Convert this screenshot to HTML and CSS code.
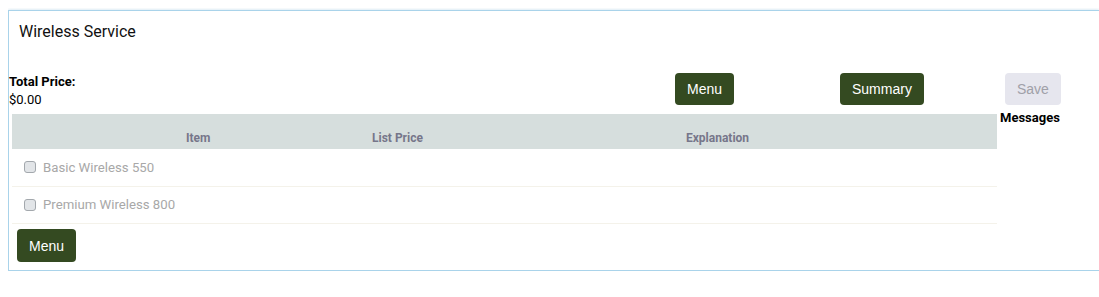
FILE: index.html
```html
<!DOCTYPE html>
<html>
<head>
<meta charset="utf-8">
<link rel="stylesheet" href="styles.css">
</head>
<body>
<div class="panel">
  <div class="title">Wireless Service</div>
  <div class="content">
    <div class="main">
      <div class="toprow">
        <div class="total">
          <div class="total-label">Total Price:</div>
          <div class="total-value">$0.00</div>
        </div>
        <div class="cell"><button class="btn">Menu</button></div>
        <div class="cell"><button class="btn">Summary</button></div>
      </div>
      <div class="table">
        <div class="thead">
          <div class="th th-item">Item</div>
          <div class="th">List Price</div>
          <div class="th">Explanation</div>
        </div>
        <div class="row"><span class="check"></span><span class="label">Basic Wireless 550</span></div>
        <div class="row"><span class="check"></span><span class="label">Premium Wireless 800</span></div>
      </div>
      <button class="btn btn-bottom">Menu</button>
    </div>
    <div class="side">
      <button class="btn-save">Save</button>
      <div class="messages">Messages</div>
    </div>
  </div>
</div>
</body>
</html>
```
FILE: styles.css
```css
* { box-sizing: border-box; }
html, body { overflow: hidden; }
body {
  margin: 8px 0 8px 8px;
  font-family: Roboto, "Liberation Sans", Arial, sans-serif;
  background: #fff;
}
.panel {
  margin-top: 2px;
  height: 261px;
  border: 1px solid #a9d3ea;
  border-right: none;
  box-shadow: 0 0 3px rgba(140, 190, 220, 0.5);
  background: #fff;
}
.title {
  padding: 11px 0 31px 10px;
  font-size: 16px;
  line-height: 20px;
  color: #111;
}
.content {
  display: flex;
}
.main {
  width: 989px;
  flex: none;
}
.toprow {
  display: grid;
  grid-template-columns: 666px 165px 1fr;
  height: 36px;
}
.total {
  font-size: 13px;
  line-height: 18px;
  color: #000;
}
.total-label { font-weight: bold; }
.btn {
  height: 32px;
  padding: 0 12px;
  border: none;
  border-radius: 4px;
  background: #344a21;
  color: #fff;
  font-family: "Liberation Sans", Arial, sans-serif;
  font-size: 14px;
  cursor: pointer;
}
.table {
  margin: 5px 0 0 3px;
  width: 985px;
}
.thead {
  display: grid;
  grid-template-columns: 360px 314px 1fr;
  height: 35px;
  background: #d6dedd;
  align-items: end;
  padding-bottom: 4px;
}
.th {
  font-size: 12px;
  line-height: 14px;
  font-weight: bold;
  color: #76768a;
}
.th-item { padding-left: 174px; }
.row {
  display: flex;
  align-items: center;
  height: 37.5px;
  border-bottom: 1px solid #f4f2ea;
  padding-left: 12px;
}
.check {
  width: 12px;
  height: 12px;
  border: 1px solid #a3a8ad;
  border-radius: 3px;
  background: #e2e5e8;
  margin-right: 7px;
}
.label {
  font-size: 13.2px;
  color: #a8a8a8;
}
.btn-bottom {
  margin: 5px 0 0 8px;
  height: 33px;
}
.side {
  padding-left: 2px;
}
.btn-save {
  margin-left: 5px;
  height: 32px;
  padding: 0 12px;
  border: none;
  border-radius: 4px;
  background: #e6e6ee;
  color: #a0a0a8;
  font-family: "Liberation Sans", Arial, sans-serif;
  font-size: 14px;
}
.messages {
  margin-top: 5px;
  font-size: 13px;
  line-height: 15px;
  font-weight: bold;
  color: #000;
}
```
